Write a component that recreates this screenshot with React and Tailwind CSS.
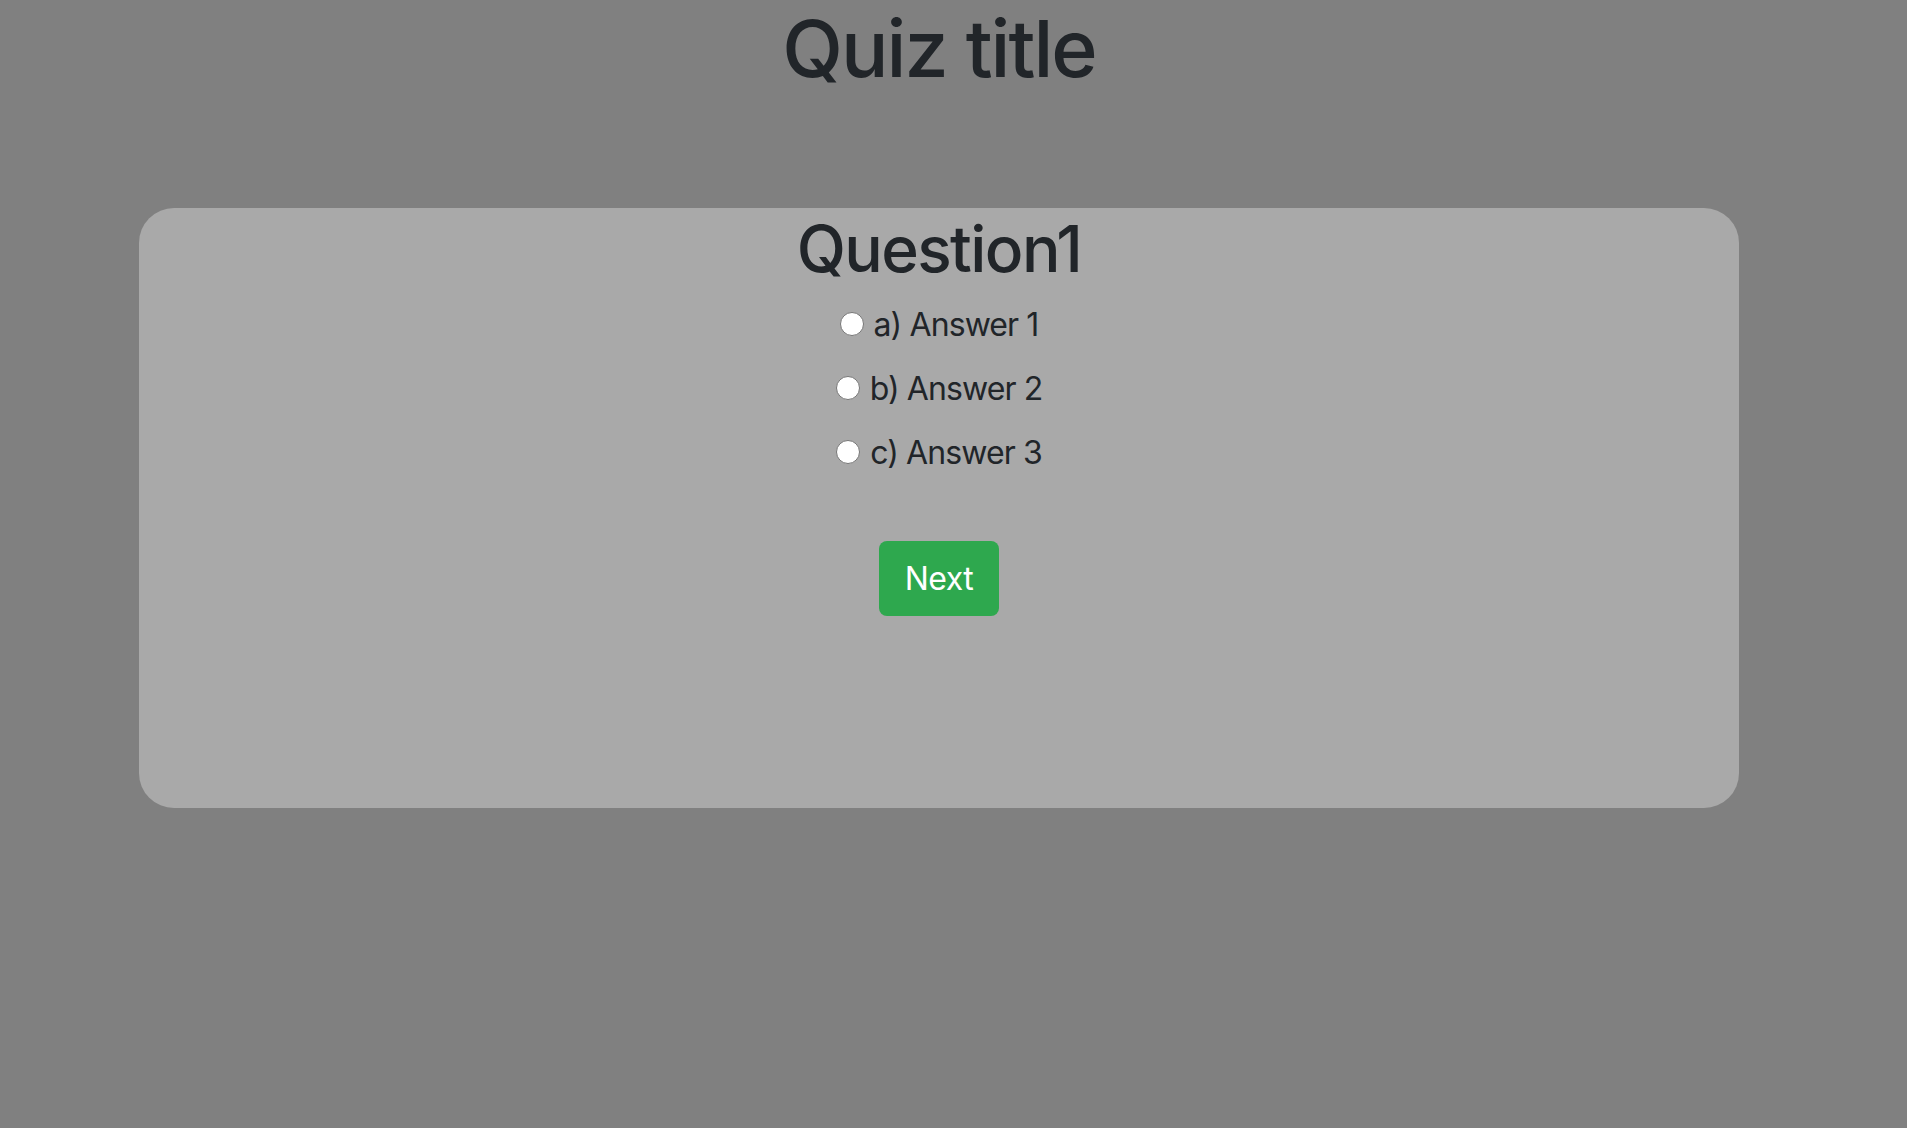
import React from "react";

const answers = [
  { id: "a", label: "a) Answer 1" },
  { id: "b", label: "b) Answer 2" },
  { id: "c", label: "c) Answer 3" },
];

export default function App() {
  return (
    <div className="min-h-[1128px] bg-[#808080] text-[#212529] font-['Inter','Liberation_Sans',sans-serif]">
      <div className="w-[1878px] flex flex-col items-center">
        {/* Title */}
        <h1 className="text-[79px] leading-[96px] font-medium tracking-[-2px]">Quiz title</h1>

        {/* Card */}
        <div className="mt-[112px] w-[1600px] h-[600px] bg-[#a9a9a9] rounded-[35px] flex flex-col items-center">
          <h2 className="mt-[2px] text-[64px] leading-[77px] font-medium tracking-[-1.6px]">Question1</h2>

          <div className="mt-[14px] flex flex-col items-center gap-4">
            {answers.map((a) => (
              <label key={a.id} className="flex items-center h-12 text-[32px] leading-[48px] tracking-[-0.9px]">
                <input
                  type="radio"
                  name="q1"
                  className="appearance-none w-6 h-6 rounded-full bg-white border border-[#767676] mr-[10px] mt-[-2px]"
                />
                <span>{a.label}</span>
              </label>
            ))}
          </div>

          <button className="mt-[64px] h-[75px] w-[120px] rounded-lg bg-[#2ea84e] text-white text-[32px] font-normal tracking-[-0.5px]">
            Next
          </button>
        </div>
      </div>
    </div>
  );
}
